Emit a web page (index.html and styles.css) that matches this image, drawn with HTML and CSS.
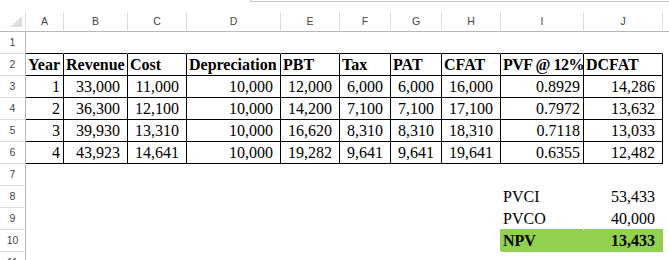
FILE: index.html
```html
<!DOCTYPE html>
<html lang="en">
<head>
<meta charset="utf-8">
<title>NPV sheet</title>
<link rel="stylesheet" href="styles.css">
</head>
<body>
<div class="sheet">
  <div class="topbar"><div class="fbox"></div></div>

  <div class="row colhead">
    <div class="ch corner"><svg width="12" height="11" viewBox="0 0 12 11"><polygon points="12,0 12,11 0,11" fill="#dfdfdf"/></svg></div>
    <div class="ch">A</div><div class="ch">B</div><div class="ch">C</div><div class="ch">D</div><div class="ch">E</div>
    <div class="ch">F</div><div class="ch">G</div><div class="ch">H</div><div class="ch">I</div><div class="ch">J</div>
    <div class="ch last"></div>
  </div>

  <div class="row">
    <div class="rh">1</div>
    <div class="c top"></div><div class="c top"></div><div class="c top"></div><div class="c top"></div><div class="c top"></div>
    <div class="c top"></div><div class="c top"></div><div class="c top"></div><div class="c top"></div><div class="c top"></div>
    <div class="c"></div>
  </div>

  <div class="row">
    <div class="rh">2</div>
    <div class="c t b">Year</div><div class="c t b">Revenue</div><div class="c t b">Cost</div><div class="c t b">Depreciation</div><div class="c t b">PBT</div>
    <div class="c t b">Tax</div><div class="c t b">PAT</div><div class="c t b">CFAT</div><div class="c t b tight">PVF @ 12%</div><div class="c t b">DCFAT</div>
    <div class="c"></div>
  </div>

  <div class="row">
    <div class="rh">3</div>
    <div class="c t r">1</div><div class="c t n">33,000</div><div class="c t n">11,000</div><div class="c t n">10,000</div><div class="c t n">12,000</div>
    <div class="c t n">6,000</div><div class="c t n">6,000</div><div class="c t n">16,000</div><div class="c t r">0.8929</div><div class="c t n">14,286</div>
    <div class="c"></div>
  </div>

  <div class="row">
    <div class="rh">4</div>
    <div class="c t r">2</div><div class="c t n">36,300</div><div class="c t n">12,100</div><div class="c t n">10,000</div><div class="c t n">14,200</div>
    <div class="c t n">7,100</div><div class="c t n">7,100</div><div class="c t n">17,100</div><div class="c t r">0.7972</div><div class="c t n">13,632</div>
    <div class="c"></div>
  </div>

  <div class="row">
    <div class="rh">5</div>
    <div class="c t r">3</div><div class="c t n">39,930</div><div class="c t n">13,310</div><div class="c t n">10,000</div><div class="c t n">16,620</div>
    <div class="c t n">8,310</div><div class="c t n">8,310</div><div class="c t n">18,310</div><div class="c t r">0.7118</div><div class="c t n">13,033</div>
    <div class="c"></div>
  </div>

  <div class="row">
    <div class="rh">6</div>
    <div class="c t r">4</div><div class="c t n">43,923</div><div class="c t n">14,641</div><div class="c t n">10,000</div><div class="c t n">19,282</div>
    <div class="c t n">9,641</div><div class="c t n">9,641</div><div class="c t n">19,641</div><div class="c t r">0.6355</div><div class="c t n">12,482</div>
    <div class="c"></div>
  </div>

  <div class="row">
    <div class="rh">7</div>
    <div class="c all"></div>
  </div>

  <div class="row">
    <div class="rh">8</div>
    <div class="c span8"></div>
    <div class="c">PVCI</div><div class="c n">53,433</div>
    <div class="c"></div>
  </div>

  <div class="row">
    <div class="rh">9</div>
    <div class="c span8"></div>
    <div class="c">PVCO</div><div class="c n">40,000</div>
    <div class="c"></div>
  </div>

  <div class="row">
    <div class="rh">10</div>
    <div class="c span8"></div>
    <div class="c b green gfirst">NPV</div><div class="c n b green glast">13,433</div>
    <div class="c"></div>
  </div>

  <div class="row last-row">
    <div class="rh">11</div>
    <div class="c all"></div>
  </div>
</div>
</body>
</html>
```

FILE: styles.css
```css
html, body {
  margin: 0;
  padding: 0;
  background: #ffffff;
}

body {
  width: 669px;
  height: 260px;
  overflow: hidden;
}

.sheet {
  display: flex;
  flex-direction: column;
  height: 260px;
  overflow: hidden;
}

.topbar {
  height: 12px;
  box-sizing: border-box;
  flex: none;
}

.fbox {
  margin-left: 250px;
  height: 2px;
  box-sizing: border-box;
  border-left: 1px solid #c6c6c6;
  border-bottom: 1px solid #c6c6c6;
}

.row {
  display: grid;
  grid-template-columns: 26px 38px 64px 59px 94px 59px 51px 51px 59px 83px 79px 1fr;
  height: 22px;
  flex: none;
}

.row.colhead {
  height: 20px;
}

.row.last-row {
  height: 9px;
  overflow: hidden;
}

.ch {
  box-sizing: border-box;
  border-right: 1px solid #dadada;
  border-bottom: 1px solid #b8b8b8;
  font-family: "Liberation Sans", Arial, sans-serif;
  font-size: 10.5px;
  line-height: 19px;
  color: #444444;
  text-align: center;
}

.ch.last {
  border-right: none;
}

.ch.corner {
  display: flex;
  justify-content: flex-end;
  align-items: flex-end;
  padding: 0 3px 4px 0;
}

.ch.corner svg {
  display: block;
}

.rh {
  box-sizing: border-box;
  border-right: 1px solid #b8b8b8;
  border-bottom: 1px solid #dadada;
  font-family: "Liberation Sans", Arial, sans-serif;
  font-size: 10.5px;
  line-height: 21px;
  color: #444444;
  text-align: center;
}

.c {
  box-sizing: border-box;
  border-right: 1px solid transparent;
  border-bottom: 1px solid transparent;
  padding: 0 2px;
  font-family: "Liberation Serif", "Times New Roman", serif;
  font-size: 16px;
  line-height: 21px;
  color: #000000;
  white-space: nowrap;
  overflow: hidden;
}

.c.top {
  border-bottom-color: #000000;
}

.c.t {
  border-right-color: #000000;
  border-bottom-color: #000000;
}

.c.b {
  font-weight: bold;
}

.c.tight {
  letter-spacing: -0.5px;
  padding-right: 0;
}

.c.n {
  text-align: right;
  padding-right: 7px;
}

.c.r {
  text-align: right;
  padding-right: 3px;
}

.c.all {
  grid-column: 2 / -1;
}

.c.span8 {
  grid-column: span 8;
}

.c.green {
  background: #92d050;
  overflow: visible;
}

.c.gfirst {
  box-shadow: -1px -1px 0 0 #92d050;
}

.c.glast {
  box-shadow: 0 -1px 0 0 #92d050;
}
```
